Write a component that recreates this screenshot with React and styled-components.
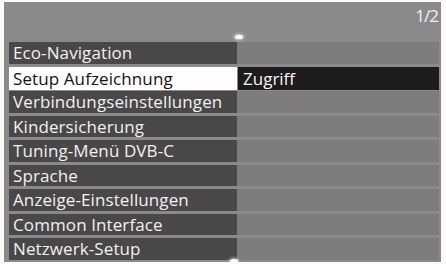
import styled, { createGlobalStyle } from 'styled-components';

const menuItems = [
  { label: 'Eco-Navigation' },
  { label: 'Setup Aufzeichnung', selected: true, value: 'Zugriff' },
  { label: 'Verbindungseinstellungen' },
  { label: 'Kindersicherung' },
  { label: 'Tuning-Menü DVB-C' },
  { label: 'Sprache' },
  { label: 'Anzeige-Einstellungen' },
  { label: 'Common Interface' },
  { label: 'Netzwerk-Setup' },
];

const GlobalStyle = createGlobalStyle`
  html, body {
    margin: 0;
    padding: 0;
    background: #fbfbfb;
  }
  body {
    font-family: 'Open Sans', 'Noto Sans', sans-serif;
  }
`;

const App = () => {
  return (
    <>
      <GlobalStyle />
      <Screen>
        <Panel>
          <Header>
            <PageIndicator>1/2</PageIndicator>
            <ScrollMark top />
          </Header>
          <MenuList>
            {menuItems.map((item) => (
              <Row key={item.label}>
                <LabelCell selected={item.selected}>{item.label}</LabelCell>
                <ValueCell active={!!item.value}>{item.value}</ValueCell>
              </Row>
            ))}
          </MenuList>
          <ScrollMark />
        </Panel>
      </Screen>
    </>
  );
};

const Screen = styled.div`
  width: 446px;
  height: 264px;
  padding: 2px 5px 2px 4px;
  box-sizing: border-box;
  background: #fbfbfb;
`;

const Panel = styled.div`
  position: relative;
  display: flex;
  flex-direction: column;
  height: 100%;
  padding: 0 2px 0 5px;
  box-sizing: border-box;
  background: #8b898a;
`;

const Header = styled.div`
  position: relative;
  display: flex;
  justify-content: flex-end;
  align-items: flex-start;
  height: 40px;
  flex-shrink: 0;
`;

const PageIndicator = styled.span`
  margin-top: 2px;
  margin-right: 1px;
  font-size: 17px;
  color: #f2f2f2;
  letter-spacing: -1px;
`;

const ScrollMark = styled.div`
  position: absolute;
  left: 226px;
  ${(props) => (props.top ? 'top: 33px;' : 'bottom: -1px;')}
  width: 8px;
  height: 4px;
  border-radius: 50%;
  background: #ffffff;
  box-shadow: 0 0 3px 1px rgba(255, 255, 255, 0.7);
`;

const MenuList = styled.div`
  display: grid;
  grid-auto-rows: 21.5px;
  row-gap: 3px;
`;

const Row = styled.div`
  display: grid;
  grid-template-columns: 228px 1fr;
`;

const LabelCell = styled.div`
  display: flex;
  align-items: center;
  padding-left: 4px;
  font-size: 17px;
  letter-spacing: 0.1px;
  white-space: nowrap;
  overflow: hidden;
  background: ${(props) => (props.selected ? '#fdfdfd' : '#4a4748')};
  color: ${(props) => (props.selected ? '#141213' : '#f1f1f1')};
`;

const ValueCell = styled.div`
  display: flex;
  align-items: center;
  padding-left: 5px;
  font-size: 17px;
  margin-left: ${(props) => (props.active ? '1px' : '0')};
  background: ${(props) => (props.active ? '#1d1b1c' : '#7e7c7d')};
  color: #f4f4f4;
`;

export default App;
